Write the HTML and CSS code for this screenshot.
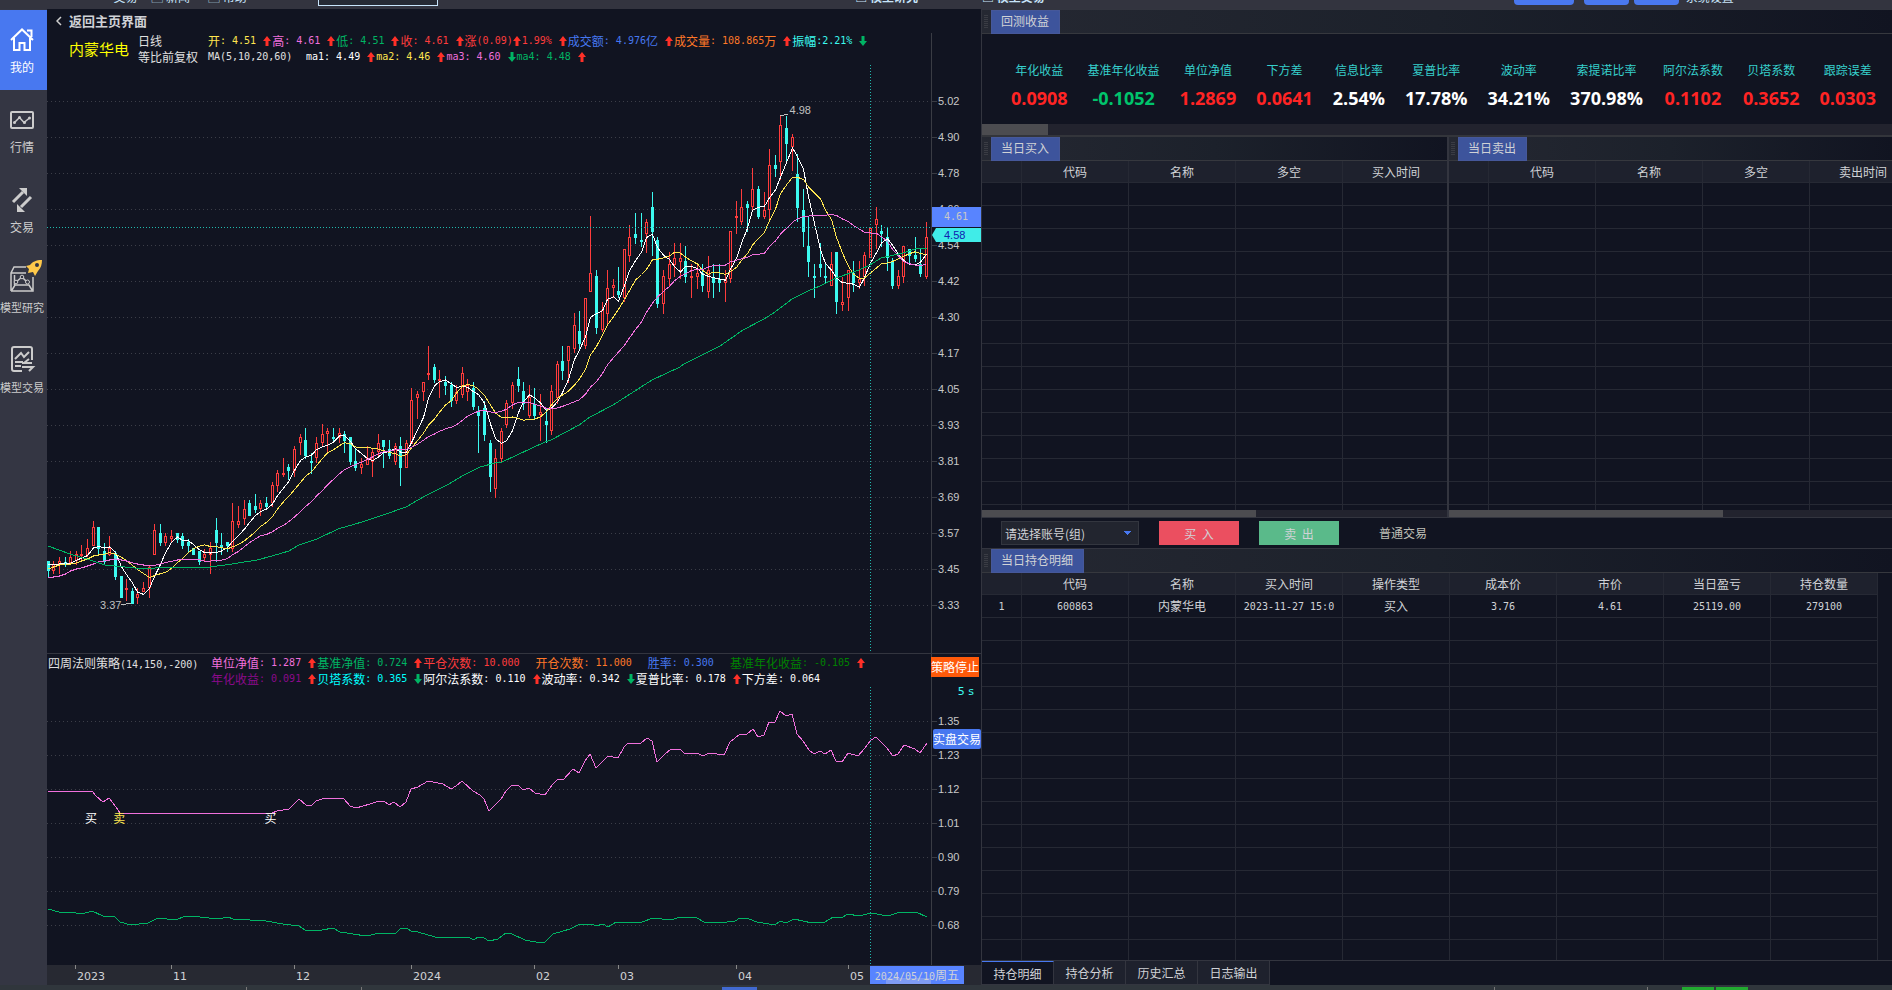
FILE: index.html
```
<!DOCTYPE html>
<html lang="zh-CN">
<head>
    <meta charset="UTF-8">
    <meta name="viewport" content="width=device-width, initial-scale=1.0">
    <title>内蒙华电 - 模型交易</title>
    <link rel="stylesheet" href="styles.css">
</head>
<body>
    <svg width="0" height="0" class="defs">
        <symbol id="up" viewBox="0 0 8 10"><path d="M4 0L8 5H5.5V10H2.5V5H0Z" fill="#ff3028"/></symbol>
        <symbol id="down" viewBox="0 0 8 10"><path d="M4 10L8 5H5.5V0H2.5V5H0Z" fill="#00b464"/></symbol>
    </svg>

    <header class="topbar">
        <span class="top-item t1">交易</span>
        <span class="top-item t2">▢ 新闻</span>
        <span class="top-item t3">▢ 帮助</span>
        <input class="top-search" type="text" aria-label="搜索">
        <span class="top-item t4">▣ 模型研究</span>
        <span class="top-item t5">▣ 模型交易</span>
        <div class="top-btns">
            <button class="wide"></button>
            <button></button>
            <button></button>
        </div>
        <span class="top-item t6">系统设置</span>
    </header>

    <main class="workspace">
        <nav class="sidebar">
            <a href="#" class="active">
                <svg viewBox="0 0 24 24"><path d="M1 12L12 1.500L23 12M4 10V22H9.500V15H14.500V22H20V10M17 2.500H21.500V9" fill="none" stroke="#fff" stroke-width="2"/></svg>
                <span>我的</span>
            </a>
            <a href="#">
                <svg viewBox="0 0 24 24"><rect x="1" y="4" width="22" height="16" rx="1" fill="none" stroke="#ccc" stroke-width="2"/><path d="M4.500 14.500L9.500 9.500L14 14.500L19.500 10" fill="none" stroke="#ccc" stroke-width="1.500"/><g fill="#ccc"><circle cx="4.500" cy="14.500" r="1.500"/><circle cx="9.500" cy="9.500" r="1.500"/><circle cx="14.500" cy="14.500" r="1.500"/><circle cx="19.500" cy="10" r="1.500"/></g></svg>
                <span>行情</span>
            </a>
            <a href="#">
                <svg viewBox="0 0 24 24"><path d="M3 14L13 4M21 9L11 19" stroke="#ccc" stroke-width="3"/><path d="M9 0H17V8L15 6L11 2ZM7 16V24H15L13 22L9 18Z" fill="#ccc"/></svg>
                <span>交易</span>
            </a>
            <a href="#">
                <svg viewBox="0 0 24 24"><path d="M1 23V5L4 -1H16M1 5H16M23 9V23H1M2 22L5 17H19L22 22M4.500 7V17" fill="none" stroke="#ccc" stroke-width="1.500"/><path d="M6 14L12 9L17 14" fill="none" stroke="#ccc" stroke-width="1.500"/><g fill="#343643" stroke="#ccc"><circle cx="6" cy="14" r="1.800"/><circle cx="12" cy="9" r="1.800"/><circle cx="17.500" cy="14" r="2"/></g><path d="M32 -8C26 -8 22 -6 20 -3L16 -2L19 1L18 5L23 4L25 8L28 3C31 0 32 -4 32 -8Z" fill="#ffc94a"/><circle cx="27" cy="-3" r="2" fill="#343643"/></svg>
                <span class="long">模型研究</span>
            </a>
            <a href="#">
                <svg viewBox="0 0 24 24"><path d="M12 23H4Q2 23 2 21V1Q2 -1 4 -1H20Q22 -1 22 1V12" fill="none" stroke="#ccc" stroke-width="2"/><path d="M5 11L11 5L14 9L19 4M5 14H13M5 18H11M12 15H22M14 15L19 11M12 19H23L19 23" fill="none" stroke="#ccc" stroke-width="2"/></svg>
                <span class="long">模型交易</span>
            </a>
        </nav>

        <section class="chart">
            <a href="#" class="back"><svg viewBox="0 0 6 10"><path d="M5 1L1 5L5 9" fill="none" stroke="#d0d0d0" stroke-width="1.500"/></svg>返回主页界面</a>

            <div class="pane price">
                <div class="left">
                    <div class="info">
                        <h1>内蒙华电</h1>
                        <div class="period"><span>日线</span><span>等比前复权</span></div>
                        <div class="lines">
                            <div class="line">
                                <span class="item yellow">开<i>: 4.51</i><svg><use href="#up"/></svg></span>
                                <span class="item pink">高<i>: 4.61</i><svg><use href="#up"/></svg></span>
                                <span class="item green">低<i>: 4.51</i><svg><use href="#up"/></svg></span>
                                <span class="item red">收<i>: 4.61</i><svg><use href="#up"/></svg></span>
                                <span class="item red tight">涨<i>(0.09)</i><svg><use href="#up"/></svg></span>
                                <span class="item red"><i>1.99%</i><svg><use href="#up"/></svg></span>
                                <span class="item blue">成交额<i>: 4.976</i>亿<svg><use href="#up"/></svg></span>
                                <span class="item orange">成交量<i>: 108.865</i>万<svg><use href="#up"/></svg></span>
                                <span class="item cyan">振幅<i>:2.21%</i><svg><use href="#down"/></svg></span>
                            </div>
                            <div class="line">
                                <span class="item"><i>MA(5,10,20,60)</i></span>
                                <span class="item white"><i>ma1: 4.49</i><svg><use href="#up"/></svg></span>
                                <span class="item yellow"><i>ma2: 4.46</i><svg><use href="#up"/></svg></span>
                                <span class="item pink"><i>ma3: 4.60</i><svg><use href="#down"/></svg></span>
                                <span class="item green"><i>ma4: 4.48</i><svg><use href="#up"/></svg></span>
                            </div>
                        </div>
                    </div>
                    <div class="plot">
                        <svg id="kline" viewBox="47 65 884 588" preserveAspectRatio="none"></svg>
                        <span class="mark high">4.98</span>
                        <span class="mark low">3.37</span>
                    </div>
                </div>
                <div class="axis">
                    <span>5.02</span><span>4.90</span><span>4.78</span><span>4.66</span><span>4.54</span>
                    <span>4.42</span><span>4.30</span><span>4.17</span><span>4.05</span><span>3.93</span>
                    <span>3.81</span><span>3.69</span><span>3.57</span><span>3.45</span><span>3.33</span>
                    <b class="tag cursor">4.61</b>
                    <b class="tag last">4.58</b>
                </div>
            </div>

            <div class="pane strategy">
                <div class="left">
                    <div class="info">
                        <div class="name">四周法则策略<i>(14,150,-200)</i></div>
                        <div class="lines">
                            <div class="line">
                                <span class="item pink">单位净值<i>: 1.287</i><svg><use href="#up"/></svg></span>
                                <span class="item green">基准净值<i>: 0.724</i><svg><use href="#up"/></svg></span>
                                <span class="item red">平仓次数<i>: 10.000</i><svg></svg></span>
                                <span class="item orange">开仓次数<i>: 11.000</i><svg></svg></span>
                                <span class="item blue">胜率<i>: 0.300</i><svg></svg></span>
                                <span class="item darkgreen">基准年化收益<i>: -0.105</i><svg><use href="#up"/></svg></span>
                            </div>
                            <div class="line">
                                <span class="item purple">年化收益<i>: 0.091</i><svg><use href="#up"/></svg></span>
                                <span class="item aqua">贝塔系数<i>: 0.365</i><svg><use href="#down"/></svg></span>
                                <span class="item white">阿尔法系数<i>: 0.110</i><svg><use href="#up"/></svg></span>
                                <span class="item white">波动率<i>: 0.342</i><svg><use href="#down"/></svg></span>
                                <span class="item white">夏普比率<i>: 0.178</i><svg><use href="#up"/></svg></span>
                                <span class="item white">下方差<i>: 0.064</i></span>
                            </div>
                        </div>
                    </div>
                    <div class="plot">
                        <svg id="equity" viewBox="47 687 884 278" preserveAspectRatio="none"></svg>
                        <span class="mark buy1">买</span>
                        <span class="mark sell1">卖</span>
                        <span class="mark buy2">买</span>
                    </div>
                </div>
                <div class="axis">
                    <button class="stop">策略停止</button>
                    <em>5 s</em>
                    <span>1.35</span><span>1.23</span><span>1.12</span><span>1.01</span><span>0.90</span><span>0.79</span><span>0.68</span>
                    <button class="live">实盘交易</button>
                </div>
            </div>

            <div class="dates">
                <span></span><span>2023</span><span>11</span><span>12</span><span>2024</span><span>02</span><span>03</span><span>04</span><span>05</span>
                <b><i>2024/05/10</i>周五</b>
            </div>
        </section>

        <section class="panels">
            <div class="title"><h2>回测收益</h2></div>
            <dl class="metrics">
                <div><dt>年化收益</dt><dd class="neg">0.0908</dd></div>
                <div><dt>基准年化收益</dt><dd class="pos">-0.1052</dd></div>
                <div><dt>单位净值</dt><dd class="neg">1.2869</dd></div>
                <div><dt>下方差</dt><dd class="neg">0.0641</dd></div>
                <div><dt>信息比率</dt><dd>2.54%</dd></div>
                <div><dt>夏普比率</dt><dd>17.78%</dd></div>
                <div><dt>波动率</dt><dd>34.21%</dd></div>
                <div><dt>索提诺比率</dt><dd>370.98%</dd></div>
                <div><dt>阿尔法系数</dt><dd class="neg">0.1102</dd></div>
                <div><dt>贝塔系数</dt><dd class="neg">0.3652</dd></div>
                <div><dt>跟踪误差</dt><dd class="neg">0.0303</dd></div>
            </dl>
            <div class="scroll top"><div></div></div>

            <div class="split">
                <div class="trades">
                    <div class="title"><h2>当日买入</h2></div>
                    <div class="grid">
                        <table data-empty="15">
                            <thead><tr><th class="no"></th><th>代码</th><th>名称</th><th>多空</th><th>买入时间</th><th></th></tr></thead>
                            <tbody></tbody>
                        </table>
                    </div>
                    <div class="scroll"><div></div></div>
                </div>
                <div class="trades">
                    <div class="title"><h2>当日卖出</h2></div>
                    <div class="grid">
                        <table data-empty="15">
                            <thead><tr><th class="no"></th><th>代码</th><th>名称</th><th>多空</th><th>卖出时间</th><th></th></tr></thead>
                            <tbody></tbody>
                        </table>
                    </div>
                    <div class="scroll"><div></div></div>
                </div>
            </div>

            <div class="toolbar">
                <select aria-label="账号">
                    <option>请选择账号(组)</option>
                </select>
                <button class="buy">买&nbsp; 入</button>
                <button class="sell">卖&nbsp; 出</button>
                <span>普通交易</span>
            </div>

            <div class="holdings">
                <div class="title"><h2>当日持仓明细</h2></div>
                <div class="grid">
                    <table data-empty="15">
                        <thead><tr><th class="no"></th><th>代码</th><th>名称</th><th>买入时间</th><th>操作类型</th><th>成本价</th><th>市价</th><th>当日盈亏</th><th>持仓数量</th></tr></thead>
                        <tbody><tr><td><i>1</i></td><td><i>600863</i></td><td>内蒙华电</td><td><i>2023-11-27 15:0</i></td><td>买入</td><td><i>3.76</i></td><td><i>4.61</i></td><td><i>25119.00</i></td><td><i>279100</i></td></tr></tbody>
                    </table>
                </div>
            </div>

            <div class="tabs">
                <button class="on">持仓明细</button>
                <button>持仓分析</button>
                <button>历史汇总</button>
                <button>日志输出</button>
            </div>
        </section>
    </main>

    <footer class="status"></footer>
    <script src="chart.js"></script>
</body>
</html>
```
FILE: styles.css
```
*{
    margin: 0; padding: 0;
    box-sizing: border-box;
}
body{
    height: 100vh;
    display: flex;
    flex-direction: column;
    overflow: hidden;
    background: #111421;
    color: #d0d2d6;
    font-family: "Noto Sans CJK SC", sans-serif;
    font-size: 12px;
    line-height: 16px;
}
a{
    color: inherit;
    text-decoration: none;
}
button, input, select{
    font-family: inherit;
    font-size: 12px;
    border: none;
    color: inherit;
}
/* half width digits */
i{
    font-family: "DejaVu Sans Mono", monospace;
    font-size: 10px;
    font-style: normal;
    white-space: pre;
}
.defs{
    position: absolute;
}

.topbar{
    position: relative;
    height: 9px;
    flex: none;
    overflow: hidden;
    background: #33343f;
    color: #c8e4fa;
}
.top-item{
    position: absolute;
    bottom: 4px;
    white-space: nowrap;
}
.t1{ left: 6%; }
.t2{ left: 8%; }
.t3{ left: 11%; }
.t4{ left: 45.2%; font-weight: bold; }
.t5{ left: 51.9%; font-weight: bold; }
.t6{ left: 89.1%; }
.top-search{
    position: absolute;
    left: 16.8%;
    bottom: 3px;
    width: 120px;
    height: 22px;
    background: #262a34;
    border: 1px solid #c8e4fa;
}
.top-btns{
    position: absolute;
    left: 80%;
    bottom: 4px;
    display: flex;
    gap: 5px;
}
.top-btns button{
    width: 45px;
    height: 20px;
    border-radius: 4px;
    background: #4a78f0;
}
.top-btns .wide{
    width: 60px;
    margin-right: 5px;
}

.workspace{
    flex: 1;
    min-height: 0;
    display: grid;
    grid-template-columns: 47px minmax(0, 934fr) minmax(0, 911fr);
    grid-template-rows: minmax(0, 1fr);
}
.sidebar{
    background: #343643;
    padding-top: 1px;
    color: #ccc;
}
.sidebar a{
    display: flex;
    flex-direction: column;
    align-items: center;
    gap: 6px;
    height: 80px;
    padding: 18px 3px 0 0;
}
.sidebar .active{
    background: #4878f0;
    color: #fff;
}
.sidebar svg{
    width: 24px;
    height: 24px;
    overflow: visible;
}
.sidebar span{
    line-height: 18px;
    white-space: nowrap;
}
.sidebar .long{
    font-size: 11px;
}

.chart{
    display: flex;
    flex-direction: column;
}
.back{
    display: flex;
    align-items: center;
    gap: 7px;
    height: 24px;
    padding-left: 9px;
    font-size: 13px;
    font-weight: bold;
}
.back svg{
    width: 6px;
    height: 10px;
}
.pane{
    min-height: 0;
    display: grid;
    grid-template-columns: minmax(0, 1fr) 50px;
    grid-template-rows: minmax(0, 1fr);
}
.price{
    flex: 620 1 0;
}
.strategy{
    flex: 311 1 0;
    border-top: 1px solid #33353f;
}
.left{
    display: flex;
    flex-direction: column;
    min-height: 0;
}
.info{
    display: flex;
    height: 32px;
    white-space: nowrap;
}
.info h1{
    width: 91px;
    padding-left: 22px;
    font-size: 15px;
    line-height: 32px;
    font-weight: normal;
    color: #ffff00;
}
.period{
    width: 70px;
    display: flex;
    flex-direction: column;
    color: #e0e0e0;
}
.line{
    display: flex;
    height: 16px;
    color: #e0e0e0;
}
.item{
    display: flex;
    align-items: center;
}
.item svg{
    width: 8px;
    height: 10px;
    margin: 0 1px 0 7px;
}
.tight svg{
    margin-left: 0;
}
.price .line:last-child .item:first-child{
    width: 98px;
}
.strategy .info{
    height: 33px;
    padding-top: 1px;
}
.name{
    width: 164px;
    padding-left: 1px;
    color: #e0e0e0;
}
.white{ color: #fff; }
.yellow{ color: #ffe650; }
.pink{ color: #f070dc; }
.green{ color: #00b464; }
.red{ color: #ff3c3c; }
.blue{ color: #4678f0; }
.orange{ color: #ff7828; }
.cyan{ color: #3cfaf0; }
.aqua{ color: #00ffff; }
.purple{ color: #8c0a8c; }
.darkgreen{ color: #008200; }

.plot{
    position: relative;
    flex: 1;
    min-height: 0;
}
.plot svg{
    display: block;
    width: 100%;
    height: 100%;
    shape-rendering: crispEdges;
}
.mark{
    position: absolute;
    line-height: 14px;
    color: #fff;
}
.high, .low{
    font-family: "Liberation Sans", sans-serif;
    font-size: 11px;
    color: #c0c0c0;
}
.high{ left: 84%; top: 6.5%; }
.low{ left: 6%; top: 90.7%; }
.buy1, .sell1, .buy2{
    top: 44.5%;
}
.buy1{ left: 4.3%; }
.sell1{ left: 7.5%; color: #ffe650; }
.buy2{ left: 24.6%; }

.axis{
    position: relative;
    display: flex;
    flex-direction: column;
    justify-content: space-between;
    border-left: 1px solid #3a3c44;
    font-family: "Liberation Sans", sans-serif;
    font-size: 11px;
    line-height: 12px;
    color: #c8c8c8;
}
.price .axis{
    padding: 62px 0 42px;
}
.strategy .axis{
    padding: 61px 0 34px;
}
.axis span{
    display: flex;
    align-items: center;
    gap: 1px;
}
.axis span::before{
    content: "";
    width: 5px;
    height: 1px;
    background: #3a3c44;
}
.tag{
    position: absolute;
    left: 0;
    right: 0;
    padding-left: 12px;
    font-weight: normal;
}
.cursor{
    top: 174px;
    height: 20px;
    line-height: 20px;
    background: #5884ff;
    font-family: "DejaVu Sans Mono", monospace;
    font-size: 10px;
}
.last{
    top: 195px;
    height: 14px;
    line-height: 14px;
    background: #40ece8;
    color: #1020b0;
    clip-path: polygon(0 50%, 4px 0, 100% 0, 100% 100%, 4px 100%);
}
.axis button{
    position: absolute;
    height: 20px;
    line-height: 20px;
    width: 48px;
    color: #fff;
    font-family: "Noto Sans CJK SC", sans-serif;
    white-space: nowrap;
}
.stop{
    top: 3px;
    left: -1px;
    background: #ff5a0a;
}
.live{
    top: 75px;
    left: 1px;
    background: #4878f0;
    border-radius: 2px;
}
.axis em{
    position: absolute;
    top: 32px;
    right: 7px;
    font-family: "DejaVu Sans", sans-serif;
    font-style: normal;
    color: #3cfaf0;
}
.dates{
    position: relative;
    display: grid;
    grid-template-columns: 28fr 96fr 123fr 117fr 123fr 84fr 118fr 112fr 133fr;
    height: 20px;
    flex: none;
    background: #272932;
    font-family: "DejaVu Sans", sans-serif;
    font-size: 11px;
    line-height: 24px;
}
.dates span{
    padding-left: 2px;
    background: linear-gradient(#888, #888) no-repeat 0 0 / 1px 4px;
}
.dates span:first-child{
    background: none;
}
.dates b{
    position: absolute;
    left: 88.1%;
    top: 1px;
    width: 94px;
    height: 18px;
    padding-left: 5px;
    line-height: 18px;
    background: linear-gradient(#7f9cf4, #7f9cf4) no-repeat 16px 12px / 45px 6px, #5884ff;
    font-family: "Noto Sans CJK SC", sans-serif;
    font-size: 12px;
    font-weight: normal;
    white-space: nowrap;
}

.panels{
    display: flex;
    flex-direction: column;
    border-left: 1px solid #33353f;
    border-top: 1px solid #33353f;
}
.title{
    flex: none;
    height: 24px;
    padding-left: 9px;
    display: flex;
    border-bottom: 1px solid #36383e;
    background: repeating-linear-gradient(transparent 0 1px, #3a3c44 1px 2px) no-repeat 2px 4px / 4px 14px, linear-gradient(90deg, #252832, #1c212b 50%, #111421);
}
.title h2{
    height: 24px;
    padding: 0 10px 0 9px;
    line-height: 20px;
    border: 1px solid #46589a;
    background: #3d549c;
    font-size: 12px;
    font-weight: normal;
}
.metrics{
    display: flex;
    gap: 20px;
    height: 90px;
    flex: none;
    padding: 28px 0 0 29px;
    overflow: hidden;
    text-align: center;
    white-space: nowrap;
}
.metrics dt{
    color: #36d0cc;
}
.metrics dd{
    margin-top: 7px;
    color: #fff;
    font: bold 18px/26px "Open Sans", sans-serif;
}
.metrics .neg{ color: #ff2424; }
.metrics .pos{ color: #00c46c; }
.scroll{
    flex: none;
    height: 7px;
    background: #22232e;
}
.scroll div{
    width: 274px;
    height: 100%;
    background: #4c4c50;
}
.scroll.top{
    height: 11px;
}
.scroll.top div{
    width: 66px;
}
.split{
    flex: 380 1 0;
    min-height: 0;
    display: grid;
    grid-template-columns: minmax(0, 465fr) minmax(0, 445fr);
    grid-template-rows: minmax(0, 1fr);
    border-top: 2px solid #33353b;
    border-bottom: 1px solid #33353f;
}
.trades{
    display: flex;
    flex-direction: column;
}
.trades + .trades{
    border-left: 2px solid #33353f;
}
.grid{
    flex: 1;
    min-height: 0;
    overflow: hidden;
}
table{
    table-layout: fixed;
    width: 0;
    border-spacing: 0;
}
th, td{
    width: 107px;
    height: 23px;
    border-right: 1px solid #262934;
    border-bottom: 1px solid #262934;
    font-weight: normal;
    text-align: center;
    line-height: 16px;
    white-space: nowrap;
}
th{
    height: 22px;
    background: #1e212d;
}
.no{
    width: 40px;
}
.toolbar{
    display: flex;
    align-items: center;
    gap: 20px;
    height: 31px;
    flex: none;
    padding-left: 19px;
    border-bottom: 1px solid #33353f;
}
.toolbar select{
    appearance: none;
    width: 138px;
    height: 24px;
    padding-left: 3px;
    border: 1px solid #33363f;
    background: linear-gradient(to bottom right, #4878f0 50%, transparent 50%) no-repeat 126px 9px / 4px 4px, linear-gradient(to bottom left, #4878f0 50%, transparent 50%) no-repeat 122px 9px / 4px 4px, #22252f;
}
.toolbar button{
    width: 80px;
    height: 24px;
}
.toolbar .buy{ background: #eb4f60; }
.toolbar .sell{ background: #5aba8a; }
.toolbar span{
    margin-left: 20px;
    color: #c0c0b8;
}
.holdings{
    flex: 411 1 0;
    min-height: 0;
    display: flex;
    flex-direction: column;
}
.tabs{
    display: flex;
    height: 25px;
    flex: none;
    border-top: 1px solid #33353f;
}
.tabs button{
    width: 72px;
    background: #1e212d;
    border: 1px solid #33353f;
    border-top: none;
    border-left: none;
}
.tabs .on{
    background: #111421;
    border-top: 1px solid #4878f0;
}
.status{
    height: 5px;
    flex: none;
    background: linear-gradient(90deg, #22aa30 32px, transparent 32px 34px, #22aa30 34px) no-repeat 92.1% 2px / 66px 3px, linear-gradient(#4169d0, #4169d0) no-repeat 38.9% 2px / 35px 3px, linear-gradient(#777, #777) no-repeat 13% 2px / 1px 3px, linear-gradient(#777, #777) no-repeat 19.1% 2px / 1px 3px, linear-gradient(#777, #777) no-repeat 79% 2px / 1px 3px, linear-gradient(#777, #777) no-repeat 87.1% 2px / 1px 3px, #30363c;
}
```
FILE: chart.js
```
// each candle: r = up, c = down, then high, body top, body bottom, low
const candles = `c561,561,571,577 r561,564,571,574 r557,561,565,574 c557,562,565,567 r551,557,563,565 r551,554,561,565
r545,554,556,562 r539,548,555,557 r521,527,546,546 c527,527,549,554 c543,551,562,565 r536,548,555,556 c551,553,577,580
c576,576,598,598 r579,588,590,601 c588,591,604,604 r588,594,598,604 r582,588,592,592 r565,567,588,598 r524,530,555,555
c524,533,543,546 r533,536,543,546 r530,536,539,543 c533,533,540,543 c533,536,546,549 c539,542,546,552 c548,548,555,555
c551,551,562,565 r549,554,558,562 r542,548,555,574 c518,530,543,562 c533,545,548,555 c542,542,546,552 r503,521,549,552
r506,521,525,528 r500,509,519,525 c500,503,516,516 c494,506,510,513 r500,503,509,516 c497,503,507,510 r482,485,503,507
r470,473,486,492 r458,473,475,477 c464,467,471,480 r446,449,471,477 r434,437,443,455 c428,440,456,459 c453,461,463,474
r437,443,458,463 r424,434,443,446 r428,431,434,453 c428,437,439,443 r428,433,438,443 c431,434,441,453 c437,437,462,465
c449,461,468,471 r458,464,468,474 r446,458,465,465 r449,452,462,477 r434,443,452,456 c440,440,447,468 c440,449,456,459
r443,446,462,465 c437,446,468,486 r440,443,468,468 r388,400,444,444 r391,394,398,419 r382,382,392,401 r346,373,375,380
c364,367,380,383 r370,379,381,398 c376,382,386,395 c382,385,401,407 r385,392,401,404 r367,373,395,398 r379,385,392,401
c382,388,407,410 c406,412,416,453 c401,408,435,441 c440,443,477,492 r449,458,489,498 r428,431,459,462 r400,403,425,428
r382,385,403,409 c367,379,386,392 c382,391,404,410 r385,397,416,418 c388,404,416,419 r394,412,415,441 c409,421,425,443
r385,391,431,435 r361,364,398,404 c346,361,371,380 r346,346,361,383 r313,325,349,353 c311,331,344,349 r298,298,346,349
r216,273,292,292 c270,276,328,334 r302,310,330,332 r270,288,314,326 r279,285,288,298 c267,291,295,298 r249,249,298,302
r225,237,256,262 c213,234,238,244 c213,240,242,247 r219,222,234,253 c192,207,232,256 c237,240,304,308 r270,276,304,314
r252,264,279,286 r243,258,265,277 r243,258,262,279 c246,261,277,283 r264,276,278,298 r264,273,277,289 c264,273,286,292
r256,270,292,298 c264,278,283,298 c264,279,283,292 r270,279,283,302 r231,231,279,283 r201,216,218,234 r189,207,222,225
c201,204,208,232 r168,189,207,211 c186,189,217,219 r192,210,217,219 r149,165,210,219 c155,165,169,177 r116,125,162,180
c116,128,144,162 r134,137,147,171 c154,174,208,222 c189,210,232,247 c216,246,262,277 c264,276,278,298 c243,264,268,277
c264,276,278,283 r252,264,286,286 c252,252,302,314 r277,302,305,311 r270,270,298,311 c261,273,283,292 r261,279,283,289
r252,255,277,286 r228,228,258,258 r207,219,225,249 c225,231,234,247 c228,237,258,271 c258,261,286,289 r270,276,286,289
r246,246,277,283 c249,249,256,265 c237,255,259,262 c249,264,274,277 r222,237,277,279`
    .split(/\s+/).map(s => ({ up: s[0] == "r", v: s.slice(1).split(",").map(Number) }));

const ma60 = "48,546 70,554 90,560 105,565 125,567 145,569 165,567 210,567 232,564 257,560 272,556 289,551 299,545 317,539 338,529 362,522 383,515 406,507 425,496 447,485 464,475 480,467 495,463 502,462 517,455 545,442 551,440 579,425 590,417 613,405 652,380 680,367 684,364 720,346 743,330 764,319 775,312 792,299 808,291 820,286 836,278 859,270 870,265 881,258 903,253 915,249 927,248";
const equity = "48,791 92,791 96,796 103,802 109,798 116,807 120,813 272,813 277,811 289,809 299,799 306,805 311,806 316,801 325,798 344,799 350,806 356,808 370,804 379,801 384,801 389,805 394,802 400,807 406,802 411,789 418,787 428,781 443,784 451,789 456,786 462,781 473,791 480,795 484,799 489,811 501,799 506,791 512,785 518,785 523,790 529,788 535,793 545,795 552,785 558,779 563,780 573,769 579,773 585,761 590,754 596,768 608,756 618,758 624,747 628,743 641,743 647,738 652,741 657,762 664,755 671,749 680,749 685,754 697,753 703,756 709,753 724,755 730,742 740,734 747,734 753,729 758,737 764,735 769,722 775,722 780,711 786,716 792,714 797,734 803,741 809,750 814,754 820,751 825,754 831,750 836,761 842,762 848,753 858,756 865,748 871,740 876,737 887,748 893,756 898,754 904,745 915,749 920,753 927,743";
const benchmark = "48,909 59,912 70,912 82,914 92,911 103,916 114,916 120,922 131,925 148,923 158,918 176,920 185,916 200,917 218,919 228,917 233,919 266,921 283,924 299,926 305,930 322,930 333,928 340,932 366,936 380,933 395,934 401,928 407,928 411,931 418,932 435,937 468,937 474,940 478,937 484,938 489,941 498,939 506,933 512,934 525,940 541,943 545,942 553,934 570,929 580,924 592,924 596,926 603,924 608,927 616,922 642,922 653,918 670,920 681,917 697,918 704,922 720,923 735,921 740,918 749,919 757,922 775,925 780,921 786,923 794,919 812,923 825,922 833,917 843,917 848,914 859,916 871,913 888,916 900,912 916,912 927,917";

const xAt = i => Math.floor(48.4 + i * 5.592);

function line(x1, y1, x2, y2, color, dash) {
    return `<line x1="${x1}" y1="${y1}" x2="${x2}" y2="${y2}" stroke="${color}"${dash ? ` stroke-dasharray="${dash}"` : ""}/>`;
}
function curve(points, color) {
    return `<polyline points="${points}" fill="none" stroke="${color}"/>`;
}
// the first values need days before the window, so they are given
function average(n, start) {
    const pts = [];
    candles.forEach((c, i) => {
        let y = start[i];
        if (i >= n - 1) {
            y = candles.slice(i - n + 1, i + 1).reduce((s, k) => s + (k.up ? k.v[1] : k.v[2]), 0) / n;
        }
        pts.push((xAt(i) + 0.5) + "," + y);
    });
    return pts.join(" ");
}

let out = "";
for (let y = 101.5; y < 610; y += 36) out += line(47, y, 931, y, "#3c3e48", "1 3");
candles.forEach((c, i) => {
    const x = xAt(i), [h, t, b, l] = c.v;
    if (c.up) {
        out += `<path d="M${x + 0.5} ${h}V${t}M${x + 0.5} ${b}V${l}" stroke="#ff3c3c"/>`;
        out += `<rect x="${x - 0.5}" y="${t + 0.5}" width="2" height="${Math.max(b - t - 1, 1)}" fill="#111421" stroke="#ff3c3c"/>`;
    } else {
        out += `<path d="M${x + 0.5} ${h}V${l}" stroke="#3cfaf0"/><rect x="${x - 1}" y="${t}" width="3" height="${b - t}" fill="#3cfaf0"/>`;
    }
});
out += curve(average(5, [565, 564, 564, 563]), "#ffffff");
out += curve(average(10, [569, 567, 565, 564, 564, 563, 561, 559, 556]), "#ffe650");
out += curve(average(20, [578, 577, 576, 574, 571, 569, 568, 566, 564, 562, 561, 560, 559, 560, 561, 563, 564, 565, 565]), "#f070dc");
out += curve(ma60, "#00b464");
out += line(47, 227.5, 931, 227.5, "#20b8ac", "1 2") + line(870.5, 65, 870.5, 653, "#20b8ac", "1 2");
out += curve("780,116 788,114", "#c0c0c0") + curve("121,605 131,603", "#c0c0c0");
document.getElementById("kline").innerHTML = out;

out = "";
for (let y = 721.5; y < 930; y += 34) out += line(47, y, 931, y, "#3c3e48", "1 3");
out += curve(equity, "#f070dc") + curve(benchmark, "#00b464");
out += line(870.5, 687, 870.5, 965, "#20b8ac", "1 2");
document.getElementById("equity").innerHTML = out;

// fill the tables with blank rows
document.querySelectorAll("table").forEach(t => {
    const n = t.tHead.rows[0].cells.length;
    for (let i = 0; i < t.dataset.empty; i++) {
        const row = t.tBodies[0].insertRow();
        for (let j = 0; j < n; j++) row.insertCell();
    }
});
```
